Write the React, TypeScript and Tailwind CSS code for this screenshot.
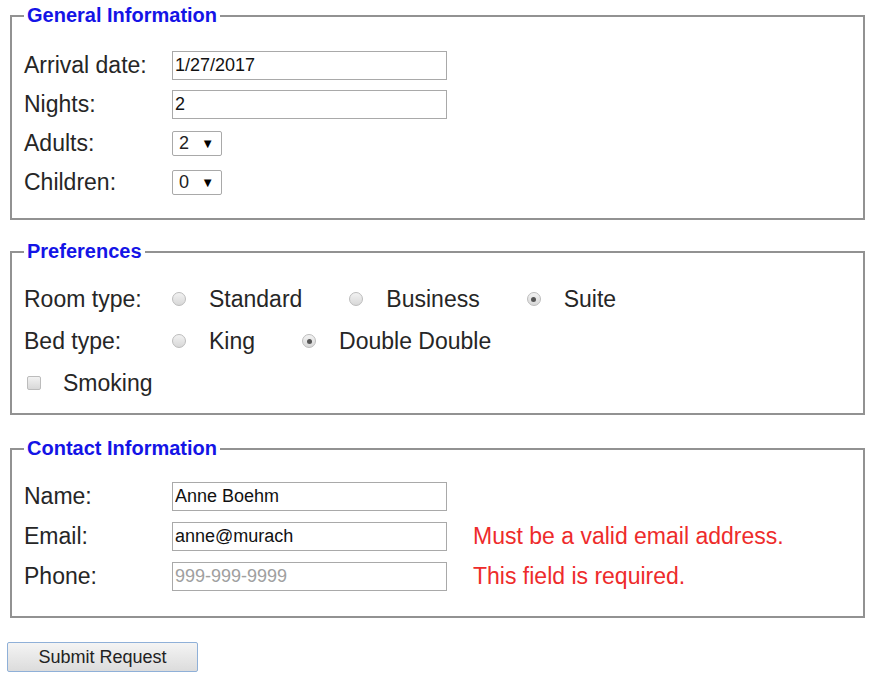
import React from 'react';

const font = { fontFamily: '"Liberation Sans", Arial, sans-serif' };

function Radio({ checked = false }: { checked?: boolean }) {
  return (
    <span className="flex h-[14px] w-[14px] shrink-0 items-center justify-center rounded-full border border-[#bcbcbc] bg-gradient-to-b from-[#f2f2f2] to-[#d8d8d8]">
      {checked && <span className="h-[5px] w-[5px] rounded-full bg-[#555]" />}
    </span>
  );
}

function Option({ label, checked }: { label: string; checked?: boolean }) {
  return (
    <span className="mr-[47px] flex items-center">
      <Radio checked={checked} />
      <span className="ml-[23px]">{label}</span>
    </span>
  );
}

function TextInput({ value, placeholder }: { value?: string; placeholder?: string }) {
  return (
    <input
      defaultValue={value}
      placeholder={placeholder}
      className="h-[29px] w-[275px] border border-[#a9a9a9] bg-white px-[2px] text-[18px] text-[#111] placeholder:text-[#a0a0a0] outline-none"
      style={font}
    />
  );
}

function Select({ value }: { value: string }) {
  return (
    <span className="flex h-[25px] w-[50px] items-center justify-between rounded-[2px] border border-[#a9a9a9] bg-white pl-[6px] pr-[7px] text-[18px] text-[#222]">
      <span>{value}</span>
      <span className="text-[13px] text-black">▼</span>
    </span>
  );
}

function Row({ label, h, children }: { label: string; h: string; children: React.ReactNode }) {
  return (
    <div className={`flex items-center ${h}`}>
      <span className="w-[148px] shrink-0">{label}</span>
      {children}
    </div>
  );
}

function Box({ title, className, children }: { title: string; className: string; children: React.ReactNode }) {
  return (
    <fieldset className={`ml-[10px] mr-[16px] border-2 border-[#929292] px-[12px] ${className}`}>
      <legend className="px-[3px] text-[20px] font-bold leading-[23px] text-[#1414e6]">{title}</legend>
      {children}
    </fieldset>
  );
}

export default function App() {
  return (
    <div className="min-h-[683px] bg-white pt-[4px] text-[23px] text-[#262626]" style={font}>
      <Box title="General Information" className="pb-[16px] pt-[19px]">
        <Row label="Arrival date:" h="h-[39px]">
          <TextInput value="1/27/2017" />
        </Row>
        <Row label="Nights:" h="h-[39px]">
          <TextInput value="2" />
        </Row>
        <Row label="Adults:" h="h-[39px]">
          <Select value="2" />
        </Row>
        <Row label="Children:" h="h-[39px]">
          <Select value="0" />
        </Row>
      </Box>

      <Box title="Preferences" className="mt-[20px] pb-[9px] pt-[15px]">
        <Row label="Room type:" h="h-[42px]">
          <Option label="Standard" />
          <Option label="Business" />
          <Option label="Suite" checked />
        </Row>
        <Row label="Bed type:" h="h-[42px]">
          <Option label="King" />
          <Option label="Double Double" checked />
        </Row>
        <div className="flex h-[42px] items-center">
          <span className="ml-[3px] h-[14px] w-[14px] rounded-[2px] border border-[#bcbcbc] bg-gradient-to-b from-[#f2f2f2] to-[#d8d8d8]" />
          <span className="ml-[22px]">Smoking</span>
        </div>
      </Box>

      <Box title="Contact Information" className="mt-[22px] pb-[20px] pt-[16px]">
        <Row label="Name:" h="h-[40px]">
          <TextInput value="Anne Boehm" />
        </Row>
        <Row label="Email:" h="h-[40px]">
          <TextInput value="anne@murach" />
          <span className="ml-[26px] text-[#ee2b2b]">Must be a valid email address.</span>
        </Row>
        <Row label="Phone:" h="h-[40px]">
          <TextInput placeholder="999-999-9999" />
          <span className="ml-[26px] text-[#ee2b2b]">This field is required.</span>
        </Row>
      </Box>

      <button
        className="ml-[7px] mt-[24px] h-[30px] w-[191px] rounded-[2px] border border-[#8fb0d8] bg-gradient-to-b from-[#f4f4f4] to-[#dcdcdc] text-[18px] text-[#222]"
        style={font}
      >
        Submit Request
      </button>
    </div>
  );
}
